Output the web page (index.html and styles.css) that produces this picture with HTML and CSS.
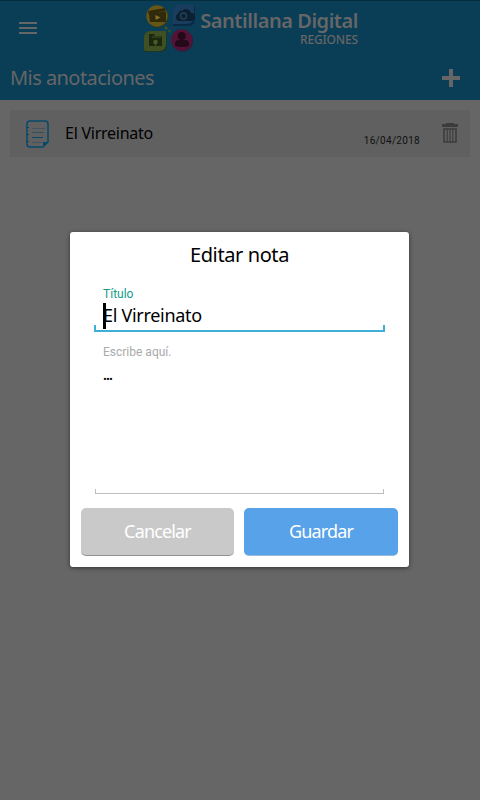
FILE: index.html
```html
<!DOCTYPE html>
<html lang="es">
<head>
<meta charset="utf-8">
<title>Mis anotaciones</title>
<link rel="stylesheet" href="styles.css">
</head>
<body>
<header class="header">
  <div class="topbar">
    <svg class="menu" width="18" height="12" viewBox="0 0 18 12"><path d="M0 0h18v2H0zM0 5h18v2H0zM0 10h18v2H0z" fill="#666"/></svg>
    <svg class="logo" width="52" height="48" viewBox="0 0 52 48">
      <circle cx="13.7" cy="13" r="10.7" fill="#263b24"/>
      <circle cx="13" cy="12" r="10.7" fill="#675616"/>
      <path d="M4 7l17-3 .5 3-17 3zM5 9.500l17-2V18H6z" fill="#302a0b"/>
      <path d="M11.500 11v5l5-2.500z" fill="#857127"/>
      <path d="M30 2h21v13q0 7-7 7H29V9q0-6 6-7z" fill="#0b2944"/>
      <path d="M34 1h16v12q0 7-7 7H29V8q0-5 5-7z" fill="#193c5f"/>
      <path d="M34.500 17a4 4 0 0 1-.3-7.500 4 4 0 0 1 4-3 5.500 5.500 0 0 1 9 2.500 4 4 0 0 1-.2 8z" fill="#0b2031"/>
      <circle cx="39.500" cy="12" r="3" fill="none" stroke="#24435a" stroke-width="1.300"/>
      <path d="M8 28h15v13q0 7-7 7H2q-2 0-2-2V35q0-7 8-7z" fill="#1b3826"/>
      <path d="M7 27h15v12q0 8-7 8H2q-2 0-2-2V34q0-7 7-7z" fill="#405022"/>
      <path d="M5 30h5l1 2h7v10H5z" fill="#1b2811"/>
      <path d="M8 33h9" stroke="#405022"/>
      <circle cx="11.500" cy="38" r="2.300" fill="#4a5a28"/>
      <path d="M10 39h3l-1.500 3z" fill="#4a5a28"/>
      <circle cx="38.500" cy="37" r="10.700" fill="#30213a"/>
      <circle cx="37.700" cy="36" r="10.700" fill="#531337"/>
      <circle cx="37.700" cy="32" r="4" fill="#230919"/>
      <path d="M31 42v-2q0-4 4-4h6q4 0 4 4v2q-7 2-14 0z" fill="#230919"/>
      <circle cx="22" cy="24" r="1.600" fill="#465024"/>
      <circle cx="28.500" cy="24" r="1.500" fill="#26355a"/>
      <circle cx="25.500" cy="27" r="1.500" fill="#30522b"/>
    </svg>
    <div class="brand"><span class="brand-name">Santillana Digital</span><span class="brand-sub">REGIONES</span></div>
  </div>
  <div class="titlebar">
    <h1>Mis anotaciones</h1>
    <svg width="18" height="18" viewBox="0 0 18 18"><path d="M7 0h4v7h7v4h-7v7H7v-7H0V7h7z" fill="#666"/></svg>
  </div>
</header>
<main class="list">
  <article class="note">
    <svg class="note-icon" width="24" height="28" viewBox="0 0 24 28" fill="none" stroke="#07496b">
      <path d="M4 1h15q3 0 3 3v18l-5 5H4q-3 0-3-3V4q0-3 3-3z" stroke-width="1.500"/>
      <path d="M17 27v-5h5z" fill="#07496b" stroke="none"/>
      <path d="M0 7.500h3M0 14.500h3M0 21.500h3" stroke-width="1.200"/>
      <path d="M6 8.500h13M6 22.500h10" stroke="#41545e"/><path d="M6 12.500h12" stroke="#30505f"/><path d="M6 17.500h11"/>
    </svg>
    <span class="note-title">El Virreinato</span>
    <time>16/04/2018</time>
    <svg class="trash" width="16" height="20" viewBox="0 0 16 20"><path d="M4 0h8v1h4v3H0V1h4z" fill="#3c3c3c"/><path d="M2 6h12v13H2z" fill="none" stroke="#3c3c3c" stroke-width="1.600"/><path d="M5.200 6v13M8 6v13M10.800 6v13" stroke="#3c3c3c" stroke-width="1.100"/></svg>
  </article>
</main>
<section class="dialog">
  <h2>Editar nota</h2>
  <div class="field field-title">
    <label>Título</label>
    <div class="value"><i class="caret"></i><span>El Virreinato</span></div>
  </div>
  <div class="field field-body">
    <label>Escribe aquí.</label>
    <div class="value">...</div>
  </div>
  <div class="actions">
    <button class="cancel">Cancelar</button>
    <button class="save">Guardar</button>
  </div>
</section>
</body>
</html>
```
FILE: styles.css
```css
* { box-sizing: border-box; }
body { margin: 0; width: 480px; height: 800px; overflow: hidden; background: #666; color: #000; font-family: "Noto Sans", "Open Sans", sans-serif; }
svg { display: block; flex: none; }
.header { height: 100px; background: #0a3d56; color: #666; border-top: 1px solid #082d3d; }
.topbar { display: flex; height: 55px; }
.menu { margin: 21px 0 0 19px; }
.logo { margin: 3px 0 0 107px; }
.brand { display: flex; flex-direction: column; align-items: flex-end; width: 157px; margin: 8px 0 0 5px; white-space: nowrap; }
.brand-name { font-size: 20px; line-height: 23px; font-weight: 600; letter-spacing: -0.45px; }
.brand-sub { margin-top: 2px; font-size: 12px; line-height: 12px; font-weight: 500; letter-spacing: -0.15px; }
.titlebar { display: flex; justify-content: space-between; align-items: center; height: 44px; padding: 0 20px 0 10px; }
h1 { margin: 0; font-size: 20px; line-height: 28px; font-weight: 400; letter-spacing: -0.55px; }
.list { padding: 10px; }
.note { display: flex; height: 47px; background: #606060; }
.note-icon { margin: 10px 0 0 16px; }
.note-title { margin: 11px 0 0 15px; width: 120px; font-size: 16px; line-height: 24px; letter-spacing: -0.25px; white-space: nowrap; }
time { margin: 24px 0 0 auto; font: 10px/14px Roboto, sans-serif; letter-spacing: 0.3px; color: #111; }
.trash { margin: 13px 12px 0 22px; }
.dialog { position: absolute; left: 70px; top: 232px; width: 339px; height: 335px; padding: 0 11px; background: #fff; border-radius: 3px; box-shadow: 0 1px 4px #333; }
h2 { margin: 8px 0 0; text-align: center; font-size: 20px; line-height: 29px; font-weight: 400; letter-spacing: -0.4px; }
.field { position: relative; margin: 0 13px; padding-left: 9px; }
.field::after { content: ""; position: absolute; left: 0; right: 0; bottom: 0; height: 5px; border: 2px solid #3fafd7; border-top: 0; }
.field-title { margin-top: 17px; height: 46px; width: 291px; }
label { display: block; font: 12px/16px Roboto, sans-serif; }
.field-title label { color: #159b88; }
.field-title .value { position: relative; font-size: 18px; line-height: 26px; letter-spacing: -0.3px; }
.caret { position: absolute; left: 0; top: 1px; width: 3px; height: 26px; background: #000; }
.field-body { margin: 12px 14px 0; height: 150px; padding-left: 8px; }
.field-body label { color: #aaa; }
.field-body::after { height: 4px; border-width: 0 1px 1px; border-color: #bdbdbd; }
.field-body .value { margin-top: 6px; font-size: 14px; line-height: 18px; font-weight: 600; letter-spacing: -0.9px; }
.actions { display: flex; gap: 10px; margin-top: 14px; }
button { width: 153px; height: 48px; padding: 0 0 2px; border: 0; border-bottom: 1px solid #929292; border-radius: 5px; background: #c9c9c9; color: #fff; font-family: inherit; font-size: 18px; line-height: 24px; letter-spacing: -0.85px; }
.save { width: 154px; background: #57a2e8; border-bottom-color: #9bbad8; }
```
